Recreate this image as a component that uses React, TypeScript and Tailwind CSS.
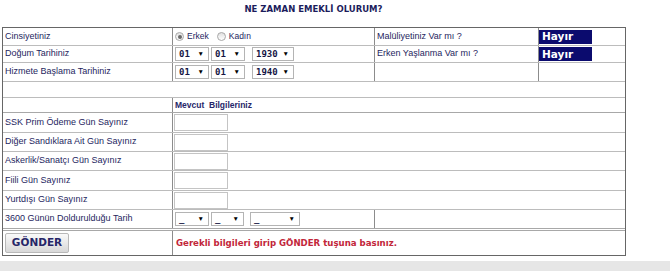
import React from "react";

const lbl = "text-[9px] text-[#1e1e5e] font-['Liberation_Sans',Arial,sans-serif] pl-[2px] flex items-center";

function DateSelect({ value, w }: { value: string; w: string }) {
  return (
    <div className={`${w} h-[14px] border border-[#b4b4b4] bg-white flex items-center justify-between pl-[3px] pr-[4px]`}>
      <span className="font-['DejaVu_Sans_Mono',monospace] font-bold text-[9px] leading-none text-[#151545]">{value}</span>
      <span className="text-[6.5px] leading-none text-black">▼</span>
    </div>
  );
}

function Hayir() {
  return (
    <div className="w-[53px] h-[14px] bg-[#0b0b6e] flex items-center pl-[3px]">
      <span className="font-['DejaVu_Sans',sans-serif] font-bold text-[10.5px] leading-none text-white">Hayır</span>
    </div>
  );
}

function Radio({ checked }: { checked?: boolean }) {
  return (
    <span className="w-[9px] h-[9px] rounded-full border border-[#a8a8a8] bg-gradient-to-b from-[#e0e0e0] to-white flex items-center justify-center">
      {checked && <span className="w-[4px] h-[4px] rounded-full bg-[#6a6a6a]" />}
    </span>
  );
}

function NumInput() {
  return <div className="w-[54px] h-[17px] border border-[#c4c4c4] bg-white" />;
}

export default function App() {
  const lower = [
    { name: "SSK Prim Ödeme Gün Sayınız", h: "h-[20px]" },
    { name: "Diğer Sandıklara Ait Gün Sayınız", h: "h-[19px]" },
    { name: "Askerlik/Sanatçı Gün Sayınız", h: "h-[19px]" },
    { name: "Fiili Gün Sayınız", h: "h-[20px]" },
    { name: "Yurtdışı Gün Sayınız", h: "h-[19px]" },
  ];

  return (
    <div className="w-[670px] h-[271px] bg-white flex flex-col overflow-hidden">
      {/* ==== TITLE ==== */}
      <div className="h-[27px] w-[627px] flex justify-center pt-[3px]">
        <span className="font-['DejaVu_Sans',sans-serif] font-bold text-[8.5px] text-[#1c1c5c] leading-[12px]">
          NE ZAMAN EMEKLİ OLURUM?
        </span>
      </div>

      {/* ==== FORM TABLE ==== */}
      <div className="ml-[2px] w-[624px] border border-[#666]">
        <div className="flex h-[18px] border-b border-[#bcbcbc]">
          <div className={`w-[170px] border-r border-[#8c8c8c] ${lbl}`}>Cinsiyetiniz</div>
          <div className="w-[202px] border-r border-[#8c8c8c] flex items-center gap-[3px] pl-[2px] text-[8.5px] text-[#1e1e5e] font-['Liberation_Sans',sans-serif]">
            <Radio checked />
            <span className="mr-[5px]">Erkek</span>
            <Radio />
            <span>Kadın</span>
          </div>
          <div className={`w-[164px] border-r border-[#8c8c8c] ${lbl}`}>Malüliyetiniz Var mı ?</div>
          <div className="flex-1 flex items-center"><Hayir /></div>
        </div>
        <div className="flex h-[17px] border-b border-[#bcbcbc]">
          <div className={`w-[170px] border-r border-[#8c8c8c] ${lbl}`}>Doğum Tarihiniz</div>
          <div className="w-[202px] border-r border-[#8c8c8c] flex items-center gap-[2px] pl-[2px]">
            <DateSelect value="01" w="w-[34px]" />
            <DateSelect value="01" w="w-[34px]" />
            <div className="w-[3px]" />
            <DateSelect value="1930" w="w-[42px]" />
          </div>
          <div className={`w-[164px] border-r border-[#8c8c8c] ${lbl}`}>Erken Yaşlanma Var mı ?</div>
          <div className="flex-1 flex items-center"><Hayir /></div>
        </div>
        <div className="flex h-[19px] border-b border-[#bcbcbc]">
          <div className={`w-[170px] border-r border-[#8c8c8c] ${lbl}`}>Hizmete Başlama Tarihiniz</div>
          <div className="w-[202px] border-r border-[#8c8c8c] flex items-center gap-[2px] pl-[2px]">
            <DateSelect value="01" w="w-[34px]" />
            <DateSelect value="01" w="w-[34px]" />
            <div className="w-[3px]" />
            <DateSelect value="1940" w="w-[42px]" />
          </div>
          <div className="w-[164px] border-r border-[#8c8c8c]" />
          <div className="flex-1" />
        </div>
        <div className="h-[16px] border-b border-[#bcbcbc]" />
        <div className="flex h-[15px] border-b border-[#a8a8a8]">
          <div className="w-[170px] border-r border-[#8c8c8c]" />
          <div className="flex items-center pl-[2px] font-['Liberation_Sans',sans-serif] font-bold text-[8.5px] text-[#27276a] whitespace-pre">
            Mevcut  Bilgileriniz
          </div>
        </div>
        {lower.map((row) => (
          <div key={row.name} className={`flex ${row.h} border-b border-[#bcbcbc]`}>
            <div className={`w-[170px] border-r border-[#8c8c8c] ${lbl}`}>{row.name}</div>
            <div className="flex items-center pl-[1px]"><NumInput /></div>
          </div>
        ))}
        <div className="flex h-[19px] border-b border-[#a8a8a8]">
          <div className={`w-[170px] border-r border-[#8c8c8c] ${lbl}`}>3600 Günün Doldurulduğu Tarih</div>
          <div className="w-[202px] border-r border-[#8c8c8c] flex items-center gap-[2px] pl-[2px]">
            <DateSelect value="_" w="w-[34px]" />
            <DateSelect value="_" w="w-[33px]" />
            <div className="w-[2px]" />
            <DateSelect value="_" w="w-[50px]" />
          </div>
          <div className="flex-1" />
        </div>
        <div className="h-[1px]" />
        <div className="flex h-[25px] border-t border-[#a8a8a8]">
          <div className="w-[170px] border-r border-[#8c8c8c] flex items-center pl-[2px]">
            <button className="w-[64px] h-[20px] rounded-[2px] border border-[#b8b8b8] bg-gradient-to-b from-[#fafafa] to-[#d8d8d8] flex items-center justify-center font-['DejaVu_Sans',sans-serif] font-bold text-[10.5px] text-[#262668]">
              GÖNDER
            </button>
          </div>
          <div className="flex items-center pl-[3px] font-['DejaVu_Sans',sans-serif] font-bold text-[8.6px] text-[#c2263a]">
            Gerekli bilgileri girip GÖNDER tuşuna basınız.
          </div>
        </div>
      </div>

      {/* ==== FOOTER BAND ==== */}
      <div className="mt-[5px] flex-1 bg-[#e6e6e6]" />
    </div>
  );
}
